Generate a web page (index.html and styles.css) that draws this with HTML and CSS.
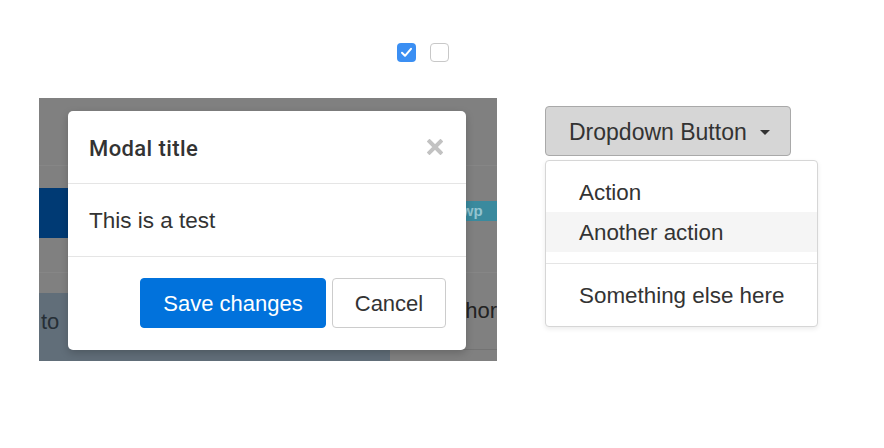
FILE: index.html
```html
<!DOCTYPE html>
<html>
<head>
<meta charset="utf-8">
<link rel="stylesheet" href="styles.css">
</head>
<body>
<div class="checks">
  <span class="cb cb-on"><svg width="19" height="19" viewBox="0 0 19 19"><path d="M5 9.8 L8 12.8 L14 5.8" fill="none" stroke="#fff" stroke-width="2" stroke-linecap="round" stroke-linejoin="round"/></svg></span>
  <span class="cb"></span>
</div>
<div class="stage">
  <div class="backdrop">
    <div class="bg-row r1"></div>
    <div class="bg-row r2"><div class="bg-blue"></div><div class="bg-teal">viewp</div></div>
    <div class="bg-row r3"></div>
    <div class="bg-row r4">
      <div class="bg-slate">to</div>
      <div class="bg-cells">
        <div class="bg-cell c1"></div>
        <div class="bg-cell c2">hor</div>
      </div>
    </div>
    <div class="modal">
      <div class="modal-header">
        <h5 class="modal-title">Modal title</h5>
        <svg class="close" width="16" height="16" viewBox="0 0 16 16"><path d="M2.5 2.5 L13.5 13.5 M13.5 2.5 L2.5 13.5" stroke="#c2c2c2" stroke-width="4" stroke-linecap="square"/></svg>
      </div>
      <div class="modal-body">This is a test</div>
      <div class="modal-footer">
        <button class="btn btn-primary">Save changes</button>
        <button class="btn btn-default">Cancel</button>
      </div>
    </div>
  </div>
  <div class="dropdown">
    <button class="dd-btn">Dropdown Button<span class="caret"></span></button>
    <ul class="dd-menu">
      <li class="dd-item">Action</li>
      <li class="dd-item hover">Another action</li>
      <li class="dd-divider"></li>
      <li class="dd-item">Something else here</li>
    </ul>
  </div>
</div>
</body>
</html>
```
FILE: styles.css
```css
html, body {
  margin: 0;
  padding: 0;
  background: #fff;
  font-family: "Liberation Sans", Arial, sans-serif;
  color: #333;
}

.checks {
  display: flex;
  gap: 14px;
  padding-left: 397px;
  margin-top: 43px;
  height: 19px;
}

.cb {
  display: block;
  box-sizing: border-box;
  width: 19px;
  height: 19px;
  border: 1px solid #c8c8c8;
  border-radius: 4px;
  background: #fff;
}

.cb-on {
  border: none;
  background: #3b8ff3;
}

.cb svg { display: block; }

.stage {
  display: flex;
  align-items: flex-start;
  gap: 48px;
  padding-left: 39px;
  margin-top: 36px;
}

/* dimmed page behind modal */
.backdrop {
  position: relative;
  width: 458px;
  height: 263px;
  background: #808080;
  overflow: hidden;
  flex: none;
}

.bg-row { border-bottom: 1px solid #868686; }
.r1 { height: 67px; }
.r2 {
  height: 106px;
  display: flex;
  justify-content: space-between;
  align-items: flex-start;
}
.r3 { height: 20px; border-bottom: none; }
.r4 {
  height: 68px;
  border-bottom: none;
  display: flex;
}

.bg-blue {
  margin-top: 22px;
  width: 60px;
  height: 50px;
  background: #003a74;
}

.bg-teal {
  margin-top: 35px;
  height: 20px;
  width: 60px;
  padding-left: 4px;
  background: #3a8a9e;
  color: #93c4d0;
  font-size: 15px;
  line-height: 20px;
  font-weight: 700;
  box-sizing: border-box;
}

.bg-slate {
  width: 352px;
  height: 68px;
  background: #616e79;
  color: #262e36;
  font-size: 22px;
  padding: 16px 0 0 2px;
  box-sizing: border-box;
  line-height: 26px;
}

.bg-cells {
  flex: 1;
  display: flex;
  height: 56px;
  border-bottom: 1px solid #737373;
}

.bg-cell {
  border-left: 1px solid #767676;
}
.c1 { width: 40px; }
.c2 {
  flex: 1;
  padding: 5px 0 0 33px;
  font-size: 22px;
  line-height: 26px;
  color: #222;
}

/* modal */
.modal {
  position: absolute;
  left: 29px;
  top: 13px;
  width: 398px;
  height: 239px;
  background: #fff;
  border-radius: 5px;
  box-shadow: 0 3px 9px rgba(0,0,0,.2);
}

.modal-header {
  height: 72px;
  border-bottom: 1px solid #e5e5e5;
  display: flex;
  align-items: center;
  justify-content: space-between;
  padding: 0 23px 0 21px;
}

.modal-title {
  margin: 0;
  font-family: Roboto, "Liberation Sans", sans-serif;
  font-size: 22px;
  letter-spacing: 0.4px;
  font-weight: 500;
  color: #333;
  padding-top: 2px;
}

.close { display: block; margin-top: -1px; }

.modal-body {
  height: 73px;
  border-bottom: 1px solid #e5e5e5;
  display: flex;
  align-items: center;
  padding: 2px 21px 0 21px;
  box-sizing: border-box;
  font-size: 22.5px;
  color: #333;
}

.modal-footer {
  display: flex;
  justify-content: flex-end;
  gap: 6px;
  padding: 21px 20px 0 20px;
}

.btn {
  height: 50px;
  border-radius: 4px;
  font-family: "Liberation Sans", Arial, sans-serif;
  font-size: 22px;
  padding: 2px 0 0 0;
  box-sizing: border-box;
}

.btn-primary {
  width: 186px;
  background: #0172dc;
  border: 1px solid #0172dc;
  color: #fff;
}

.btn-default {
  width: 114px;
  background: #fff;
  border: 1px solid #cccccc;
  color: #333;
}

/* dropdown */
.dropdown {
  margin-top: 8px;
  display: flex;
  flex-direction: column;
  align-items: flex-start;
}

.dd-btn {
  width: 246px;
  height: 50px;
  box-sizing: border-box;
  padding: 2px 0 0 23px;
  background: #d6d6d6;
  border: 1px solid #a9a9a9;
  border-radius: 4px;
  font-family: "Liberation Sans", Arial, sans-serif;
  font-size: 23px;
  color: #333;
  display: flex;
  align-items: center;
  text-align: left;
}

.caret {
  display: block;
  width: 0;
  height: 0;
  margin-left: 13px;
  margin-top: 0;
  border-left: 5px solid transparent;
  border-right: 5px solid transparent;
  border-top: 5px solid #333;
}

.dd-menu {
  list-style: none;
  margin: 4px 0 0 0;
  padding: 11px 0;
  width: 273px;
  box-sizing: border-box;
  border: 1px solid #d6d6d6;
  border-radius: 4px;
  background: #fff;
  box-shadow: 0 2px 5px rgba(0,0,0,.08);
}

.dd-item {
  height: 40px;
  line-height: 42px;
  padding-left: 33px;
  font-size: 22.4px;
  color: #333;
}

.dd-item.hover { background: #f5f5f5; }

.dd-divider {
  height: 1px;
  margin: 11px 0;
  background: #e5e5e5;
}
```
